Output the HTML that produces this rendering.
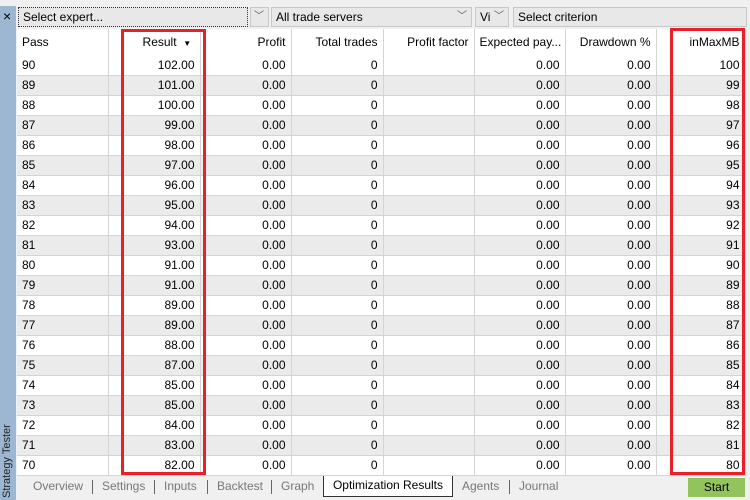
<!DOCTYPE html>
<html><head><style>
*{margin:0;padding:0;box-sizing:border-box}
body{width:750px;height:500px;overflow:hidden;background:#f0f0f0;font-family:"Liberation Sans",Arial,sans-serif;font-size:12px;color:#000;position:relative}
.a{position:absolute}
.side{left:0;top:6px;width:16px;height:494px;background:#9db6d2}
.cb{background:#e8e8e8;border:1px solid #c8c8c8;height:20px;top:7px;line-height:18px;padding-left:4px}
.arr{position:absolute;right:4px;top:0;color:#555;font-size:10px}
table{position:absolute;left:17px;top:29px;width:728px;border-collapse:collapse;table-layout:fixed;background:#fff}
td{height:20px;border-right:1px solid #d4d4d4;border-bottom:1px solid #d4d4d4;text-align:right;padding:0 5px;white-space:nowrap;overflow:hidden}
tr.h td{height:26px;border-bottom:none;border-right:1px solid #d4d4d4}
tr.g td{background:#ebebeb}
td.l{text-align:left}
.tab{top:477px;height:20px;line-height:18px;color:#777;font-size:12px}
.sep{top:480px;width:1px;height:14px;background:#666}
</style></head><body>
<div class="a side"></div>
<div class="a" style="left:3px;top:9px;font-size:14px;line-height:14px">×</div>
<div class="a" style="left:1px;top:420px;width:14px;height:80px;"><div style="transform:rotate(-90deg);transform-origin:0 0;position:absolute;left:0;top:78px;width:80px;font-size:11px;white-space:nowrap;color:#222">Strategy Tester</div></div>
<div class="a cb" style="left:18px;width:230px;border:1px dotted #333">Select expert...</div>
<div class="a cb" style="left:250px;width:19px;"><span class="arr">﹀</span></div>
<div class="a cb" style="left:271px;width:201px">All trade servers<span class="arr">﹀</span></div>
<div class="a cb" style="left:475px;width:34px">Vi<span class="arr">﹀</span></div>
<div class="a cb" style="left:513px;width:234px">Select criterion</div>
<table>
<colgroup><col style="width:91px"><col style="width:92px"><col style="width:91px"><col style="width:92px"><col style="width:91px"><col style="width:91px"><col style="width:91px"><col style="width:89px"></colgroup>
<tr class="h"><td class="l">Pass</td><td>Result &nbsp;<span style="font-size:8px">▼</span>&nbsp;</td><td>Profit</td><td>Total trades</td><td>Profit factor</td><td>Expected pay...</td><td>Drawdown %</td><td>inMaxMB</td></tr>
<tr><td class="l">90</td><td>102.00</td><td>0.00</td><td>0</td><td></td><td>0.00</td><td>0.00</td><td>100</td></tr>
<tr class="g"><td class="l">89</td><td>101.00</td><td>0.00</td><td>0</td><td></td><td>0.00</td><td>0.00</td><td>99</td></tr>
<tr><td class="l">88</td><td>100.00</td><td>0.00</td><td>0</td><td></td><td>0.00</td><td>0.00</td><td>98</td></tr>
<tr class="g"><td class="l">87</td><td>99.00</td><td>0.00</td><td>0</td><td></td><td>0.00</td><td>0.00</td><td>97</td></tr>
<tr><td class="l">86</td><td>98.00</td><td>0.00</td><td>0</td><td></td><td>0.00</td><td>0.00</td><td>96</td></tr>
<tr class="g"><td class="l">85</td><td>97.00</td><td>0.00</td><td>0</td><td></td><td>0.00</td><td>0.00</td><td>95</td></tr>
<tr><td class="l">84</td><td>96.00</td><td>0.00</td><td>0</td><td></td><td>0.00</td><td>0.00</td><td>94</td></tr>
<tr class="g"><td class="l">83</td><td>95.00</td><td>0.00</td><td>0</td><td></td><td>0.00</td><td>0.00</td><td>93</td></tr>
<tr><td class="l">82</td><td>94.00</td><td>0.00</td><td>0</td><td></td><td>0.00</td><td>0.00</td><td>92</td></tr>
<tr class="g"><td class="l">81</td><td>93.00</td><td>0.00</td><td>0</td><td></td><td>0.00</td><td>0.00</td><td>91</td></tr>
<tr><td class="l">80</td><td>91.00</td><td>0.00</td><td>0</td><td></td><td>0.00</td><td>0.00</td><td>90</td></tr>
<tr class="g"><td class="l">79</td><td>91.00</td><td>0.00</td><td>0</td><td></td><td>0.00</td><td>0.00</td><td>89</td></tr>
<tr><td class="l">78</td><td>89.00</td><td>0.00</td><td>0</td><td></td><td>0.00</td><td>0.00</td><td>88</td></tr>
<tr class="g"><td class="l">77</td><td>89.00</td><td>0.00</td><td>0</td><td></td><td>0.00</td><td>0.00</td><td>87</td></tr>
<tr><td class="l">76</td><td>88.00</td><td>0.00</td><td>0</td><td></td><td>0.00</td><td>0.00</td><td>86</td></tr>
<tr class="g"><td class="l">75</td><td>87.00</td><td>0.00</td><td>0</td><td></td><td>0.00</td><td>0.00</td><td>85</td></tr>
<tr><td class="l">74</td><td>85.00</td><td>0.00</td><td>0</td><td></td><td>0.00</td><td>0.00</td><td>84</td></tr>
<tr class="g"><td class="l">73</td><td>85.00</td><td>0.00</td><td>0</td><td></td><td>0.00</td><td>0.00</td><td>83</td></tr>
<tr><td class="l">72</td><td>84.00</td><td>0.00</td><td>0</td><td></td><td>0.00</td><td>0.00</td><td>82</td></tr>
<tr class="g"><td class="l">71</td><td>83.00</td><td>0.00</td><td>0</td><td></td><td>0.00</td><td>0.00</td><td>81</td></tr>
<tr><td class="l">70</td><td>82.00</td><td>0.00</td><td>0</td><td></td><td>0.00</td><td>0.00</td><td>80</td></tr>
</table>
<div class="a" style="left:121px;top:29px;width:85px;height:446px;border:3px solid #e8202a"></div>
<div class="a" style="left:670px;top:28px;width:75px;height:447px;border:3px solid #e8202a"></div>
<div class="a tab" style="left:33px">Overview</div>
<div class="a sep" style="left:92px"></div>
<div class="a tab" style="left:102px">Settings</div>
<div class="a sep" style="left:154px"></div>
<div class="a tab" style="left:164px">Inputs</div>
<div class="a sep" style="left:207px"></div>
<div class="a tab" style="left:217px">Backtest</div>
<div class="a sep" style="left:271px"></div>
<div class="a tab" style="left:281px">Graph</div>
<div class="a tab" style="left:323px;top:476px;width:130px;height:21px;background:#fff;border:1px solid #333;border-top:none;color:#000;text-align:center">Optimization Results</div>
<div class="a tab" style="left:462px">Agents</div>
<div class="a sep" style="left:509px"></div>
<div class="a tab" style="left:519px">Journal</div>
<div class="a" style="left:688px;top:478px;width:57px;height:19px;background:#92c35c;text-align:center;line-height:19px">Start</div>
</body></html>
